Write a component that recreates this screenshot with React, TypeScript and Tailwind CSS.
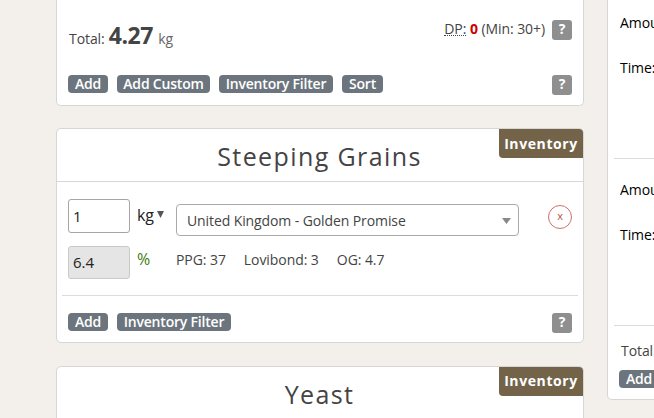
import type { ReactNode } from 'react';

function Action({ children, width }: { children: ReactNode; width: string }) {
  return (
    <button
      className={`${width} flex h-[18px] shrink-0 items-center justify-center rounded-[4px] bg-[#6c757d] text-[14px] leading-[18px] font-semibold tracking-[-0.2px] whitespace-nowrap text-white`}
    >
      {children}
    </button>
  );
}

function Help() {
  return (
    <span className="flex h-5 w-5 shrink-0 items-center justify-center rounded-[3px] bg-[#8f8f8f] pb-[2px] text-[14px] leading-[18px] font-bold text-white">
      ?
    </span>
  );
}

function CardHeader({ title, badgePadding }: { title: string; badgePadding: string }) {
  return (
    <header className="relative h-[53px] border-b border-[#d6d6d6]">
      <h2 className="pt-[9px] pr-px text-center text-[25px] leading-[36px] font-medium tracking-[1.4px] text-[#444]">
        {title}
      </h2>
      <span
        className={`${badgePadding} absolute top-0 right-0 flex h-[29px] w-[84px] items-center justify-center rounded-tr-[4px] rounded-bl-[4px] bg-[#736349] text-[14px] font-bold tracking-[0.6px] text-white`}
      >
        Inventory
      </span>
    </header>
  );
}

export default function App() {
  return (
    <div className="flex h-[418px] w-[654px] overflow-hidden bg-[#f3efea] pl-14 font-['Open_Sans',sans-serif] text-[14px] font-medium tracking-[-0.07px] text-[#444]">
      <main className="w-[528px] shrink-0">
        <section className="h-[106px] rounded-b-[5px] border border-t-0 border-[#d6d6d6] bg-white pr-[11px] pl-[11px]">
          <div className="flex h-[75px] justify-between pt-5">
            <div className="-mt-px flex items-baseline pl-px leading-[32px] whitespace-nowrap">
              <span>Total:</span>
              <b className="ml-1 text-[23px] tracking-[-0.4px]">4.27</b>
              <span className="ml-[5px] font-normal text-[#666]">kg</span>
            </div>
            <div className="flex whitespace-nowrap">
              <div className="mr-[7px] leading-[18px]">
                <abbr className="inline-block h-[16px] border-b border-dotted border-[#444] no-underline">DP:</abbr>{' '}
                <b className="text-[#c00]">0</b> (Min: 30+)
              </div>
              <Help />
            </div>
          </div>
          <div className="flex gap-[9px]">
            <Action width="w-10">Add</Action>
            <Action width="w-[93px]">Add Custom</Action>
            <Action width="w-[114px]">Inventory Filter</Action>
            <Action width="w-[41px]">Sort</Action>
            <div className="ml-auto">
              <Help />
            </div>
          </div>
        </section>

        <section className="mt-[22px] h-[215px] rounded-[5px] border border-[#d6d6d6] bg-white">
          <CardHeader title="Steeping Grains" badgePadding="pb-px" />
          <div className="flex h-[64px] items-start pt-[17px] pr-[11px] pl-[11px]">
            <div className="h-[34px] w-[62px] rounded-[3px] border border-[#a5a5a5] pl-1 text-[15px] leading-[33px] font-normal text-[#222]">1</div>
            <span className="ml-[7px] text-[16px] leading-[32px] font-normal text-[#222]">kg</span>
            <svg className="mt-[12px] ml-[3px]" width="7" height="7" viewBox="0 0 7 7">
              <path d="M0 0h7L3.5 7z" fill="#555" />
            </svg>
            <div className="mt-[5px] ml-auto flex h-8 w-[343px] items-center rounded-[4px] border border-[#aaa] pr-[7px] pl-[10px] whitespace-nowrap">
              <span className="tracking-[-0.1px]">United Kingdom - Golden Promise</span>
              <svg className="mt-[2px] ml-auto" width="9" height="6" viewBox="0 0 9 6">
                <path d="M0 0h9L4.5 6z" fill="#888" />
              </svg>
            </div>
            <span className="mt-[6px] ml-[29px] flex h-6 w-6 shrink-0 justify-center rounded-full border border-[#c96f6f] text-[11px] leading-[19px] text-[#b94a48]">
              x
            </span>
          </div>
          <div className="mx-[5px] flex h-[50px] items-start border-b border-[#dcdcdc] pl-[6px]">
            <div className="h-[33px] w-[62px] rounded-[3px] border border-[#c9c9c9] bg-[#e5e5e5] pl-1 text-[15px] leading-[31px] font-normal text-[#222]">
              6.4
            </div>
            <span className="w-[39px] pl-[7px] text-[16px] leading-[26px] font-normal text-[#3a7d0a]">%</span>
            <div className="flex gap-[18px] pl-[7px] leading-[27px] whitespace-nowrap">
              <span>PPG: 37</span>
              <span>Lovibond: 3</span>
              <span>OG: 4.7</span>
            </div>
          </div>
          <div className="flex gap-[9px] px-[11px] pt-[17px]">
            <Action width="w-10">Add</Action>
            <Action width="w-[114px]">Inventory Filter</Action>
            <div className="ml-auto">
              <Help />
            </div>
          </div>
        </section>

        <section className="mt-[23px] h-[215px] rounded-[5px] border border-[#d6d6d6] bg-white">
          <CardHeader title="Yeast" badgePadding="pb-[3px]" />
        </section>
      </main>

      <aside className="ml-[23px] h-[400px] w-[60px] shrink-0 rounded-b-[5px] border border-t-0 border-[#d6d6d6] bg-white text-black">
        <div className="ml-[6px] h-[159px] border-b border-[#dcdcdc] pl-[6px]">
          <p className="pt-[13px] leading-5">Amount:</p>
          <p className="pt-[25px] leading-5">Time:</p>
        </div>
        <div className="ml-[6px] h-[167px] border-b border-[#dcdcdc] pl-[6px]">
          <p className="pt-[21px] leading-5">Amount:</p>
          <p className="pt-[25px] leading-5">Time:</p>
        </div>
        <p className="pt-[15px] pl-[13px] leading-5 text-[#444]">Total:</p>
        <div className="pt-[9px] pl-[11px]">
          <Action width="w-10">Add</Action>
        </div>
      </aside>
    </div>
  );
}
